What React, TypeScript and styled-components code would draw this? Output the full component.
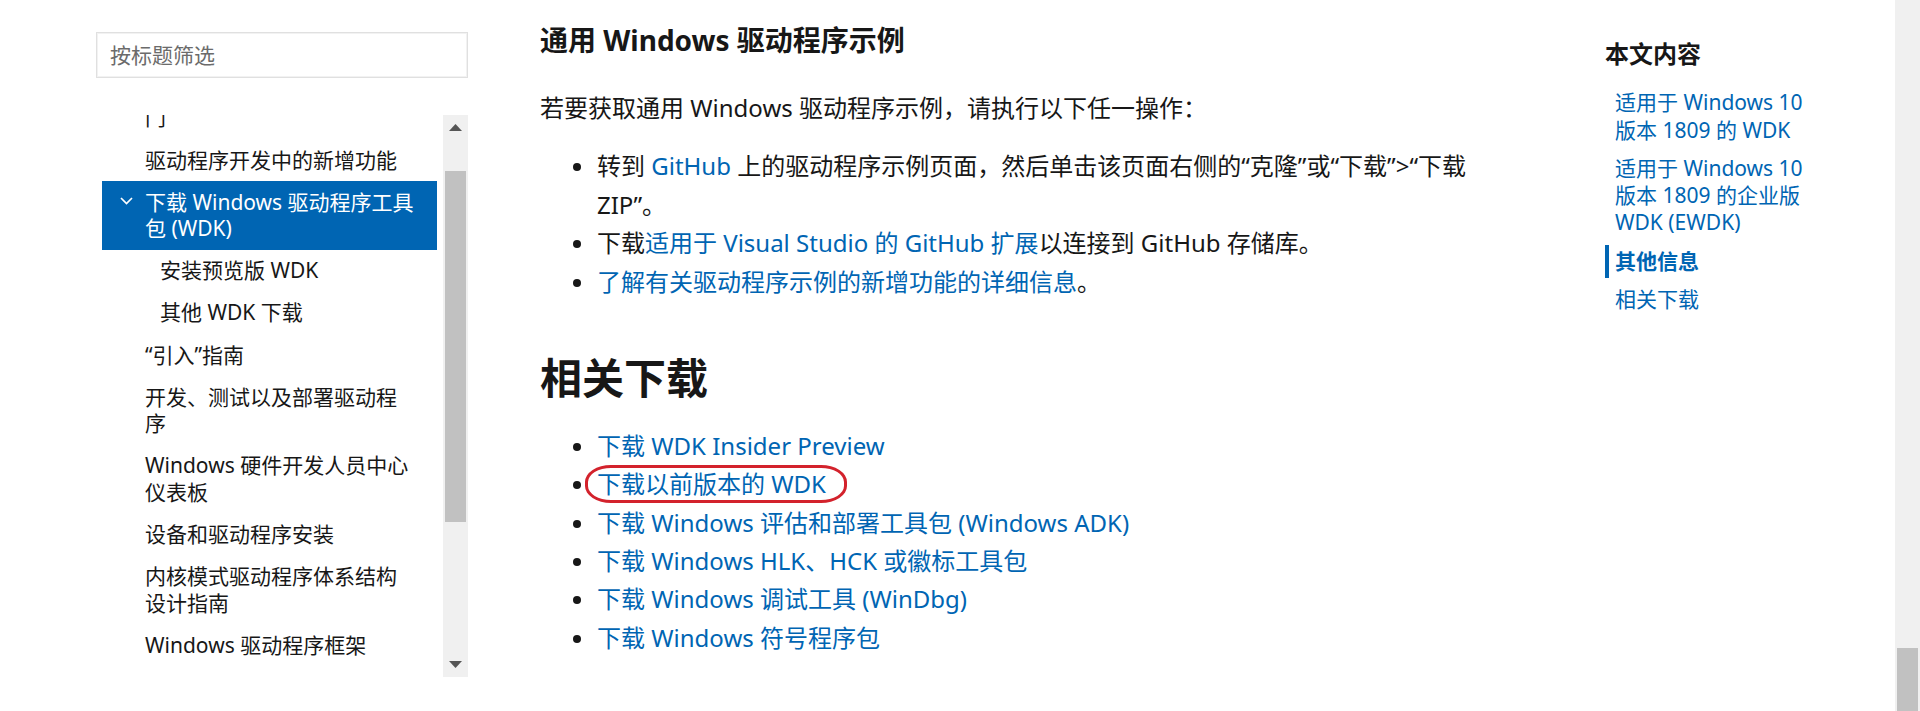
import React, { useLayoutEffect, useRef } from "react";
import styled, { createGlobalStyle } from "styled-components";

const FONT = `"Noto Sans", "Noto Sans CJK SC", sans-serif`;
const BLUE = "#0065b3";
const TEXT = "#171717";

const GlobalStyle = createGlobalStyle`
  html, body { margin: 0; padding: 0; background: #fff; overflow: hidden; }
  body { font-family: ${FONT}; color: ${TEXT}; }
  * { box-sizing: border-box; }
`;

const Page = styled.div`
  display: flex;
  width: 100%;
  height: 711px;
`;

const Layout = styled.div`
  flex: 1;
  min-width: 0;
  display: flex;
`;

/* ---------- left sidebar ---------- */
const Sidebar = styled.nav`
  flex: none;
  width: 372px;
  margin-left: 96px;
  padding-top: 32px;
  display: flex;
  flex-direction: column;
`;

const FilterInput = styled.input`
  width: 100%;
  height: 46px;
  border: 1px solid #e0e0e0;
  box-shadow: inset 0 0 0 1px #f2f2f2;
  padding: 0 13px;
  font: 21px ${FONT};
  color: ${TEXT};
  outline: none;
  &::placeholder {
    color: #6b6b6b;
  }
`;

const NavBox = styled.div`
  margin-top: 37px;
  height: 562px;
  display: flex;
`;

const NavViewport = styled.div`
  position: relative;
  flex: 1;
  overflow: hidden;
`;

const NavList = styled.ul`
  list-style: none;
  margin: 0;
  padding: 0;
`;

const NavItem = styled.li<{ $level: number; $active?: boolean; $expander?: boolean }>`
  display: flex;
  margin: 0 6px;
  padding: 7.7px 21px 7.7px
    ${(p) => (p.$expander ? 18 : p.$level === 0 ? 43 : 58)}px;
  font-size: 21px;
  line-height: 26.7px;
  background: ${(p) => (p.$active ? BLUE : "transparent")};
  color: ${(p) => (p.$active ? "#fff" : TEXT)};
`;

const ChevronSlot = styled.span`
  flex: none;
  width: 25px;
  height: 26.7px;
  display: flex;
  align-items: center;
  padding-bottom: 2px;
`;

const ScrollTrack = styled.div`
  flex: none;
  width: 25px;
  background: #f0f0f0;
  display: flex;
  flex-direction: column;
`;

const ScrollButton = styled.div`
  flex: none;
  height: 25px;
  display: flex;
  align-items: center;
  justify-content: center;
`;

const ScrollRail = styled.div<{ $end?: boolean }>`
  flex: 1;
  padding: 0 2px;
  display: flex;
  flex-direction: column;
  justify-content: ${(p) => (p.$end ? "flex-end" : "flex-start")};
`;

const Thumb = styled.div<{ $offset: number; $size: number }>`
  flex: none;
  margin-top: ${(p) => p.$offset}px;
  height: ${(p) => p.$size}px;
  background: #c1c1c1;
`;

/* ---------- main column ---------- */
const Main = styled.main`
  flex: none;
  width: 950px;
  margin-left: 72px;
  padding-top: 22px;
  font-size: 24px;
  line-height: 38.4px;
`;

const H3 = styled.h3`
  margin: 0;
  font-size: 28px;
  line-height: 36px;
  font-weight: 700;
`;

const H2 = styled.h2`
  margin: 50.5px 0 0;
  font-size: 42px;
  line-height: 52px;
  font-weight: 700;
`;

const Para = styled.p`
  margin: 31px 0 0;
`;

const BulletList = styled.ul<{ $gap: number }>`
  list-style: none;
  margin: ${(p) => p.$gap}px 0 0;
  padding: 0;
`;

const Bullet = styled.li`
  position: relative;
  display: grid;
  grid-template-columns: 57px 1fr;
  &::before {
    content: "";
    width: 8px;
    height: 8px;
    border-radius: 50%;
    background: ${TEXT};
    margin: 16px 0 0 33px;
  }
`;

const ItemText = styled.span``;

const Link = styled.a`
  color: ${BLUE};
  text-decoration: none;
`;

const Highlight = styled.span`
  position: absolute;
  left: 45px;
  top: 0;
  width: 262px;
  height: 38px;
  border: 3.5px solid #d3222c;
  border-radius: 26px / 17px;
  pointer-events: none;
`;

/* ---------- right column ---------- */
const Aside = styled.aside`
  flex: 1;
  margin-left: 115px;
  padding-top: 38px;
`;

const AsideTitle = styled.h2`
  margin: 0;
  font-size: 24px;
  line-height: 32px;
  font-weight: 700;
`;

const TocList = styled.ul`
  list-style: none;
  margin: 16.3px 0 0;
  padding: 0;
  width: 210px;
  display: flex;
  flex-direction: column;
  gap: 5px;
`;

const TocItem = styled.li<{ $active?: boolean }>`
  border-left: 4px solid ${(p) => (p.$active ? BLUE : "transparent")};
  padding: 3px 0 3px 6px;
  font-size: 21px;
  line-height: 27.3px;
  font-weight: ${(p) => (p.$active ? 700 : 400)};
`;

const Chevron = () => (
  <svg width="13" height="8" viewBox="0 0 13 8" aria-hidden>
    <polyline points="1,1 6.5,6.5 12,1" fill="none" stroke="#fff" strokeWidth="1.7" />
  </svg>
);

const Arrow = ({ up }: { up?: boolean }) => (
  <svg width="13" height="7" viewBox="0 0 13 7" aria-hidden>
    <polygon points={up ? "0,7 6.5,0 13,7" : "0,0 6.5,7 13,0"} fill="#555" />
  </svg>
);

type NavEntry = { text: string; level: number; active?: boolean; expander?: boolean; anchor?: boolean };

const navEntries: NavEntry[] = [
  { text: "Windows 硬件开发入门", level: 0 },
  { text: "驱动程序开发人员的快速入门", level: 0 },
  { text: "驱动程序开发中的新增功能", level: 0, anchor: true },
  { text: "下载 Windows 驱动程序工具包 (WDK)", level: 0, active: true, expander: true },
  { text: "安装预览版 WDK", level: 1 },
  { text: "其他 WDK 下载", level: 1 },
  { text: "“引入”指南", level: 0 },
  { text: "开发、测试以及部署驱动程序", level: 0 },
  { text: "Windows 硬件开发人员中心仪表板", level: 0 },
  { text: "设备和驱动程序安装", level: 0 },
  { text: "内核模式驱动程序体系结构设计指南", level: 0 },
  { text: "Windows 驱动程序框架", level: 0 },
  { text: "Windows 驱动程序示例", level: 0 },
];

const downloads = [
  "下载 WDK Insider Preview",
  "下载以前版本的 WDK",
  "下载 Windows 评估和部署工具包 (Windows ADK)",
  "下载 Windows HLK、HCK 或徽标工具包",
  "下载 Windows 调试工具 (WinDbg)",
  "下载 Windows 符号程序包",
];

const tocEntries = [
  { text: "适用于 Windows 10 版本 1809 的 WDK" },
  { text: "适用于 Windows 10 版本 1809 的企业版 WDK (EWDK)" },
  { text: "其他信息", active: true },
  { text: "相关下载" },
];

export default function App() {
  const viewportRef = useRef<HTMLDivElement>(null);
  const anchorRef = useRef<HTMLLIElement>(null);

  useLayoutEffect(() => {
    const vp = viewportRef.current;
    const item = anchorRef.current;
    if (vp && item) vp.scrollTop = item.offsetTop - 24;
  }, []);

  return (
    <>
      <GlobalStyle />
      <Page>
        <Layout>
          <Sidebar>
            <FilterInput placeholder="按标题筛选" />
            <NavBox>
              <NavViewport ref={viewportRef}>
                <NavList>
                  {navEntries.map((e) => (
                    <NavItem
                      key={e.text}
                      ref={e.anchor ? anchorRef : undefined}
                      $level={e.level}
                      $active={e.active}
                      $expander={e.expander}
                    >
                      {e.expander && (
                        <ChevronSlot>
                          <Chevron />
                        </ChevronSlot>
                      )}
                      <span>{e.text}</span>
                    </NavItem>
                  ))}
                </NavList>
              </NavViewport>
              <ScrollTrack>
                <ScrollButton>
                  <Arrow up />
                </ScrollButton>
                <ScrollRail>
                  <Thumb $offset={31} $size={351} />
                </ScrollRail>
                <ScrollButton>
                  <Arrow />
                </ScrollButton>
              </ScrollTrack>
            </NavBox>
          </Sidebar>

          <Main>
            <H3>通用 Windows 驱动程序示例</H3>
            <Para>若要获取通用 Windows 驱动程序示例，请执行以下任一操作：</Para>
            <BulletList $gap={20}>
              <Bullet>
                <ItemText>
                  转到 <Link href="#">GitHub</Link> 上的驱动程序示例页面，然后单击该页面右侧的“克隆”或“下载”&gt;“下载 ZIP”。
                </ItemText>
              </Bullet>
              <Bullet>
                <ItemText>
                  下载<Link href="#">适用于 Visual Studio 的 GitHub 扩展</Link>以连接到 GitHub 存储库。
                </ItemText>
              </Bullet>
              <Bullet>
                <ItemText>
                  <Link href="#">了解有关驱动程序示例的新增功能的详细信息</Link>。
                </ItemText>
              </Bullet>
            </BulletList>

            <H2>相关下载</H2>
            <BulletList $gap={23.3}>
              {downloads.map((d, i) => (
                <Bullet key={d}>
                  <ItemText>
                    <Link href="#">{d}</Link>
                  </ItemText>
                  {i === 1 && <Highlight />}
                </Bullet>
              ))}
            </BulletList>
          </Main>

          <Aside>
            <AsideTitle>本文内容</AsideTitle>
            <TocList>
              {tocEntries.map((t) => (
                <TocItem key={t.text} $active={t.active}>
                  <Link href="#">{t.text}</Link>
                </TocItem>
              ))}
            </TocList>
          </Aside>
        </Layout>

        <ScrollTrack>
          <ScrollRail $end>
            <Thumb $offset={0} $size={63} />
          </ScrollRail>
        </ScrollTrack>
      </Page>
    </>
  );
}
